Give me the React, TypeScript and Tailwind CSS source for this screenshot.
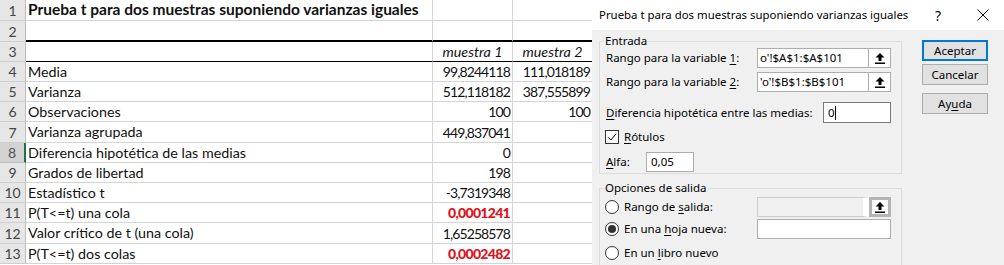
import React from "react";

type Row = {
  n: number;
  h: number;
  a?: string;
  b?: string;
  c?: string;
  kind?: "title" | "head" | "red";
};

const rows: Row[] = [
  { n: 1, h: 21, a: "Prueba t para dos muestras suponiendo varianzas iguales", kind: "title" },
  { n: 2, h: 21 },
  { n: 3, h: 20, b: "muestra 1", c: "muestra 2", kind: "head" },
  { n: 4, h: 20, a: "Media", b: "99,8244118", c: "111,018189" },
  { n: 5, h: 20, a: "Varianza", b: "512,118182", c: "387,555899" },
  { n: 6, h: 20, a: "Observaciones", b: "100", c: "100" },
  { n: 7, h: 21, a: "Varianza agrupada", b: "449,837041" },
  { n: 8, h: 20, a: "Diferencia hipotética de las medias", b: "0" },
  { n: 9, h: 20, a: "Grados de libertad", b: "198" },
  { n: 10, h: 20, a: "Estadístico t", b: "-3,7319348" },
  { n: 11, h: 20, a: "P(T<=t) una cola", b: "0,0001241", kind: "red" },
  { n: 12, h: 21, a: "Valor crítico de t (una cola)", b: "1,65258578" },
  { n: 13, h: 20, a: "P(T<=t) dos colas", b: "0,0002482", kind: "red" },
];

function Sheet() {
  return (
    <div
      className="w-[592px] h-[265px] overflow-hidden bg-white text-[14.3px] text-[#111]"
      style={{ fontFamily: "Lato, 'Open Sans', sans-serif" }}
    >
      {rows.map((r) => {
        const bottom =
          r.n === 2
            ? "border-b-2 border-b-black"
            : r.n === 3
            ? "border-b border-b-black"
            : "border-b border-b-[#d4d4d4]";
        const valCls =
          r.kind === "head"
            ? "justify-center italic"
            : r.kind === "red"
            ? "justify-end pr-[2px] font-black text-[#e0121c] text-[14px] tracking-[-0.7px]"
            : "justify-end pr-[2px] text-[14px] tracking-[-0.9px]";
        return (
          <div key={r.n} className="flex" style={{ height: r.h }}>
            <div
              className={
                "w-[26px] shrink-0 flex items-center justify-center border-b border-r text-[14px] " +
                (r.n === 8
                  ? "bg-[#d2d2d2] border-r-2 border-r-[#217346] text-[#555] border-b-[#bdbdbd]"
                  : "bg-[#e6e6e6] border-r-[#bdbdbd] border-b-[#cfcfcf] text-[#444]")
              }
            >
              {r.n}
            </div>
            <div
              className={
                "w-[407px] shrink-0 flex items-center pl-[2px] whitespace-nowrap border-r border-r-[#d4d4d4] " +
                bottom +
                (r.kind === "title" ? " font-bold text-[15.5px]" : "")
              }
            >
              {r.a}
            </div>
            <div
              className={
                "w-[80px] shrink-0 flex items-center whitespace-nowrap border-r border-r-[#d4d4d4] " +
                bottom +
                " " +
                valCls
              }
            >
              {r.b}
            </div>
            <div
              className={
                "w-[80px] shrink-0 flex items-center whitespace-nowrap overflow-hidden border-r border-r-[#d4d4d4] " +
                bottom +
                " " +
                (r.kind === "head"
                  ? "justify-center italic"
                  : "justify-end pr-[2px] text-[14px] tracking-[-0.9px]")
              }
            >
              {r.c}
            </div>
          </div>
        );
      })}
    </div>
  );
}

function UpArrow() {
  return (
    <svg width="12" height="13" viewBox="0 0 12 13">
      <path d="M6 1 L10.5 5.5 H7.5 V9 H4.5 V5.5 H1.5 Z" fill="#000" />
      <rect x="1" y="10.5" width="10" height="1.5" fill="#000" />
    </svg>
  );
}

function RefButton({ disabled }: { disabled?: boolean }) {
  return (
    <div
      className={
        "w-[22px] h-full flex items-center justify-center bg-white " +
        (disabled ? "border-[3px] border-[#b4b4b4]" : "border border-[#adadad] border-l-0")
      }
    >
      <UpArrow />
    </div>
  );
}

function Radio({ checked }: { checked?: boolean }) {
  return (
    <div className="w-[14px] h-[14px] rounded-full border border-[#333] bg-white flex items-center justify-center shrink-0">
      {checked && <div className="w-[8px] h-[8px] rounded-full bg-[#333]" />}
    </div>
  );
}

function U({ children }: { children: React.ReactNode }) {
  return <span className="underline underline-offset-2">{children}</span>;
}

function Dialog() {
  return (
    <div
      className="w-[412px] h-[265px] flex flex-col bg-[#f0f0f0] text-[11.5px] text-black"
      style={{ fontFamily: "'Noto Sans', 'Open Sans', sans-serif" }}
    >
      <div className="h-[30px] bg-white flex items-center pl-[7px] shrink-0">
        <span className="whitespace-nowrap text-[11.4px]">
          Prueba t para dos muestras suponiendo varianzas iguales
        </span>
        <span className="ml-auto mr-[36px] text-[14px]">?</span>
        <svg width="12" height="12" viewBox="0 0 12 12" className="mr-[15px]">
          <path d="M0.5 0.5 L11.5 11.5 M11.5 0.5 L0.5 11.5" stroke="#000" strokeWidth="1" />
        </svg>
      </div>
      <div className="flex">
        <div className="pl-[7px] w-[310px] shrink-0">
          <fieldset className="mt-[4px] border border-[#dcdcdc] pb-[1px]">
            <legend className="ml-[4px] px-[1px] leading-[14px]">Entrada</legend>
            <div className="flex items-center h-[20px]">
              <div className="w-[157px] pl-[6px] whitespace-nowrap">
                Rango para la variable <U>1</U>:
              </div>
              <div className="w-[112px] h-full border border-[#adadad] bg-white flex items-center pl-[2px] overflow-hidden whitespace-nowrap">
                o'!$A$1:$A$101
              </div>
              <RefButton />
            </div>
            <div className="flex items-center h-[20px] mt-[4px]">
              <div className="w-[157px] pl-[6px] whitespace-nowrap">
                Rango para la variable <U>2</U>:
              </div>
              <div className="w-[112px] h-full border border-[#adadad] bg-white flex items-center pl-[2px] overflow-hidden whitespace-nowrap">
                'o'!$B$1:$B$101
              </div>
              <RefButton />
            </div>
            <div className="flex items-center h-[21px] mt-[10px]">
              <div className="w-[223px] pl-[6px] whitespace-nowrap">
                <U>D</U>iferencia hipotética entre las medias:
              </div>
              <div className="w-[68px] h-full border border-[#7a7a7a] bg-white flex items-center pl-[4px]">
                0<span className="inline-block w-px h-[14px] bg-black" />
              </div>
            </div>
            <div className="flex items-center h-[14px] mt-[7px]">
              <div className="ml-[5px] w-[14px] h-[14px] border border-[#333] bg-white flex items-center justify-center">
                <svg width="12" height="12" viewBox="0 0 12 12">
                  <path d="M2 6.2 L4.8 9 L10.2 2.8" stroke="#000" strokeWidth="1" fill="none" />
                </svg>
              </div>
              <span className="ml-[5px]">
                <U>R</U>ótulos
              </span>
            </div>
            <div className="flex items-center h-[20px] mt-[8px]">
              <div className="w-[46px] pl-[6px]">
                <U>A</U>lfa:
              </div>
              <div className="w-[48px] h-full border border-[#adadad] bg-white flex items-center pl-[4px]">
                0,05
              </div>
            </div>
          </fieldset>
          <fieldset className="mt-[7px] border border-[#dcdcdc] pb-[4px]">
            <legend className="ml-[4px] px-[1px] leading-[14px]">Opciones de salida</legend>
            <div className="flex items-center h-[20px] mt-[2px]">
              <div className="w-[157px] pl-[5px] flex items-center">
                <Radio />
                <span className="ml-[5px] whitespace-nowrap">
                  Rango de <U>s</U>alida:
                </span>
              </div>
              <div className="w-[112px] h-full border border-[#cccccc] bg-[#f0f0f0] border-r-[6px] border-r-white" />
              <RefButton disabled />
            </div>
            <div className="flex items-center h-[20px] mt-[2px]">
              <div className="w-[157px] pl-[5px] flex items-center">
                <Radio checked />
                <span className="ml-[5px] whitespace-nowrap">
                  En una <U>h</U>oja nueva:
                </span>
              </div>
              <div className="w-[134px] h-full border border-[#adadad] bg-white" />
            </div>
            <div className="flex items-center h-[20px] mt-[4px]">
              <div className="pl-[5px] flex items-center">
                <Radio />
                <span className="ml-[5px] whitespace-nowrap">
                  En un <U>l</U>ibro nuevo
                </span>
              </div>
            </div>
          </fieldset>
        </div>
        <div className="ml-[20px] mt-[10px] flex flex-col">
          <div className="w-[66px] h-[21px] border-2 border-[#0078d7] bg-[#e1e1e1] flex items-center justify-center">
            Aceptar
          </div>
          <div className="w-[66px] h-[21px] mt-[3px] border border-[#adadad] bg-[#e1e1e1] flex items-center justify-center">
            Cancelar
          </div>
          <div className="w-[66px] h-[21px] mt-[8px] border border-[#adadad] bg-[#e1e1e1] flex items-center justify-center">
            Ay<U>u</U>da
          </div>
        </div>
      </div>
    </div>
  );
}

export default function App() {
  return (
    <div className="flex w-[1004px] h-[265px] overflow-hidden bg-white">
      <Sheet />
      <Dialog />
    </div>
  );
}
